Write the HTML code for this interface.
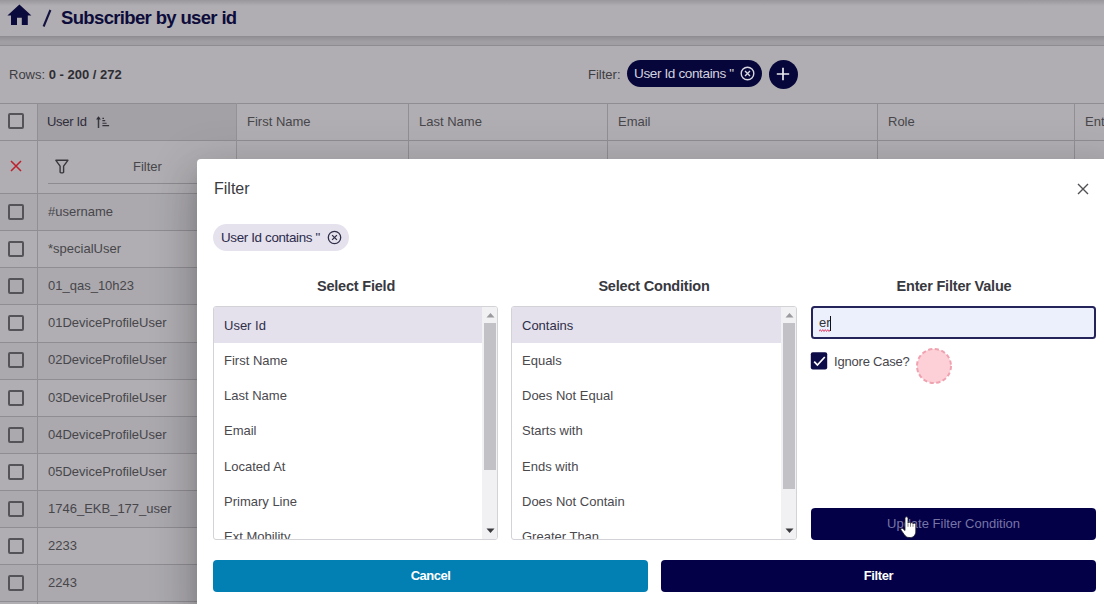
<!DOCTYPE html>
<html><head><meta charset="utf-8">
<style>
*{box-sizing:border-box;margin:0;padding:0}
html,body{width:1104px;height:604px;overflow:hidden;background:#b0aeb2;font-family:"Liberation Sans",sans-serif;position:relative}
.a{position:absolute}
.hdr{left:0;top:0;width:1104px;height:36px;background:#b0aeb2}
.band{left:0;top:36px;width:1104px;height:10px;background:linear-gradient(to bottom,#8d8b90 0px,#939196 1.5px,#9c9a9f 4px,#a19fa4 6px,#a09ea3 8.5px,#8e8c91 9.5px,#928f95 10px)}
.tb{left:0;top:46px;width:1104px;height:57px;background:#b0aeb2}
.tsh{left:0;top:0;width:1104px;height:6px;background:linear-gradient(to bottom,#99979c,rgba(176,174,178,0))}
.t{white-space:nowrap;line-height:1}
.grid{left:0;top:103px;width:1104px;height:501px}
.hl{left:0;width:1104px;height:1px;background:#8f8d92}
.vl{top:103px;width:1px;background:#918f94}
.cb{width:16px;height:16px;border:2px solid #545358;border-radius:2px}
.cell{font-size:13px;color:#47464b}
.dlg{left:197px;top:159px;width:920px;height:460px;background:#fff;border-radius:4px;box-shadow:0px 11px 15px -7px rgba(0,0,0,0.2),0px 24px 38px 3px rgba(0,0,0,0.14),0px 9px 46px 8px rgba(0,0,0,0.12)}
.lb{border:1px solid #d3d2d6;border-radius:3px;overflow:hidden;background:#fff}
.li{position:absolute;left:10px;font-size:13px;color:#4a494e;white-space:nowrap;line-height:1}
.btn{border-radius:4px;color:#fff;text-align:center;font-size:13px}
</style></head><body>
<!-- header -->
<div class="a hdr"></div>
<div class="a band"></div>
<div class="a tsh"></div>
<div class="a tb"></div>

<!-- home icon -->
<svg class="a" style="left:4.6px;top:0.8px" width="28.8" height="28.8" viewBox="0 0 24 24"><path d="M10 20v-6h4v6h5v-8h3L12 3 2 12h3v8z" fill="#0b0a3c"/></svg>
<svg class="a" style="left:40px;top:8px" width="14" height="20" viewBox="0 0 14 20"><path d="M3.6 18.5 L10.4 2" stroke="#14133f" stroke-width="2.1"/></svg>
<div class="a t" style="left:61px;top:8.5px;font-size:18.5px;font-weight:bold;color:#0d0c3b;letter-spacing:-0.65px">Subscriber by user id</div>

<div class="a t" style="left:9px;top:68px;font-size:13px;color:#3e3d42">Rows: <b style="color:#2e2d32">0 - 200 / 272</b></div>
<div class="a t" style="left:588px;top:68px;font-size:13px;color:#3e3d42">Filter:</div>
<div class="a" style="left:627px;top:60px;width:135px;height:27px;border-radius:14px;background:#07063a"></div>
<div class="a t" style="left:634px;top:66.5px;font-size:13.6px;color:#d2d1df;letter-spacing:-0.4px">User Id contains "</div>
<svg class="a" style="left:740px;top:66px" width="15" height="15" viewBox="0 0 15 15"><circle cx="7.5" cy="7.5" r="6.3" fill="none" stroke="#d8d7e0" stroke-width="1.4"/><path d="M5 5 L10 10 M10 5 L5 10" stroke="#d8d7e0" stroke-width="1.4"/></svg>
<div class="a" style="left:768.5px;top:59.5px;width:29px;height:29px;border-radius:50%;background:#07063a"></div>
<svg class="a" style="left:775px;top:66px" width="16" height="16" viewBox="0 0 16 16"><path d="M8 1.8 V14.2 M1.8 8 H14.2" stroke="#e8e8ee" stroke-width="1.7"/></svg>

<!-- table -->
<div class="a" style="left:0;top:193px;width:1104px;height:37px;background:#aba9ae"></div><div class="a" style="left:0;top:267px;width:1104px;height:37px;background:#aba9ae"></div><div class="a" style="left:0;top:342px;width:1104px;height:37px;background:#aba9ae"></div><div class="a" style="left:0;top:416px;width:1104px;height:37px;background:#aba9ae"></div><div class="a" style="left:0;top:490px;width:1104px;height:37px;background:#aba9ae"></div><div class="a" style="left:0;top:564px;width:1104px;height:37px;background:#aba9ae"></div>
<div class="a" style="left:37px;top:103px;width:200px;height:37px;background:#a3a1a6"></div>
<div class="a hl" style="top:103px"></div>
<div class="a hl" style="top:140px"></div>
<div class="a hl" style="top:193px"></div>
<div class="a hl" style="top:230px"></div>
<div class="a hl" style="top:267px"></div>
<div class="a hl" style="top:304px"></div>
<div class="a hl" style="top:342px"></div>
<div class="a hl" style="top:379px"></div>
<div class="a hl" style="top:416px"></div>
<div class="a hl" style="top:453px"></div>
<div class="a hl" style="top:490px"></div>
<div class="a hl" style="top:527px"></div>
<div class="a hl" style="top:564px"></div>
<div class="a hl" style="top:601px"></div>
<div class="a vl" style="left:37px;height:501px"></div>
<div class="a vl" style="left:236px;height:501px;background:#949297"></div>
<div class="a vl" style="left:408px;height:60px"></div>
<div class="a vl" style="left:607px;height:60px"></div>
<div class="a vl" style="left:877px;height:60px"></div>
<div class="a vl" style="left:1074px;height:60px"></div>

<div class="a cb" style="left:8px;top:113px"></div>
<div class="a t cell" style="left:47px;top:115px;letter-spacing:-0.3px;color:#2e2d3b">User Id</div>
<svg class="a" style="left:95px;top:115px" width="16" height="14" viewBox="0 0 16 14"><path d="M3.5 13 V2.5" stroke="#3a393f" stroke-width="1.5"/><path d="M1.1 4.6 L3.5 1.2 L5.9 4.6 Z" fill="#2f2e38"/><path d="M7.4 3.4 H9 M7.4 5.6 H10.2 M7.4 8.2 H11.6 M7.4 10.6 H14.1" stroke="#35343c" stroke-width="1.1"/></svg>
<div class="a t cell" style="left:247px;top:115px">First Name</div>
<div class="a t cell" style="left:419px;top:115px">Last Name</div>
<div class="a t cell" style="left:618px;top:115px">Email</div>
<div class="a t cell" style="left:888px;top:115px">Role</div>
<div class="a t cell" style="left:1085px;top:115px">Ent</div>

<svg class="a" style="left:10px;top:160px" width="12" height="12" viewBox="0 0 12 12"><path d="M1 1 L11 11 M11 1 L1 11" stroke="#bd1f2d" stroke-width="1.5"/></svg>
<svg class="a" style="left:55px;top:159px" width="14" height="16" viewBox="0 0 14 16"><path d="M0.9 1.3 H12.9 L8.6 7.2 V13.2 Q6.9 14.6 5.1 13.2 V7.2 Z" stroke="#38373c" stroke-width="1.4" fill="none" stroke-linejoin="round"/></svg>
<div class="a t cell" style="left:133px;top:160px">Filter</div>
<div class="a" style="left:48px;top:183px;width:180px;height:1px;background:#8d8b90"></div>

<div class="a cb" style="left:8px;top:204px"></div><div class="a t cell" style="left:48px;top:205px">#username</div>
<div class="a cb" style="left:8px;top:241px"></div><div class="a t cell" style="left:48px;top:242px">*specialUser</div>
<div class="a cb" style="left:8px;top:278px"></div><div class="a t cell" style="left:48px;top:279px">01_qas_10h23</div>
<div class="a cb" style="left:8px;top:315px"></div><div class="a t cell" style="left:48px;top:316px">01DeviceProfileUser</div>
<div class="a cb" style="left:8px;top:352px"></div><div class="a t cell" style="left:48px;top:353px">02DeviceProfileUser</div>
<div class="a cb" style="left:8px;top:390px"></div><div class="a t cell" style="left:48px;top:391px">03DeviceProfileUser</div>
<div class="a cb" style="left:8px;top:427px"></div><div class="a t cell" style="left:48px;top:428px">04DeviceProfileUser</div>
<div class="a cb" style="left:8px;top:464px"></div><div class="a t cell" style="left:48px;top:465px">05DeviceProfileUser</div>
<div class="a cb" style="left:8px;top:501px"></div><div class="a t cell" style="left:48px;top:502px">1746_EKB_177_user</div>
<div class="a cb" style="left:8px;top:538px"></div><div class="a t cell" style="left:48px;top:539px">2233</div>
<div class="a cb" style="left:8px;top:575px"></div><div class="a t cell" style="left:48px;top:576px">2243</div>

<!-- dialog -->
<div class="a dlg"></div>

<div class="a t" style="left:214px;top:181px;font-size:16px;color:#3b3b3f">Filter</div>
<svg class="a" style="left:1077px;top:183px" width="12" height="12" viewBox="0 0 12 12"><path d="M1 1 L11 11 M11 1 L1 11" stroke="#505055" stroke-width="1.4"/></svg>
<div class="a" style="left:213px;top:224px;width:136px;height:27px;border-radius:14px;background:#e5e2ee"></div>
<div class="a t" style="left:221px;top:230.5px;font-size:13.4px;color:#2c2b4a;letter-spacing:-0.35px">User Id contains "</div>
<svg class="a" style="left:327px;top:230px" width="15" height="15" viewBox="0 0 15 15"><circle cx="7.5" cy="7.5" r="6.2" fill="none" stroke="#2f2e48" stroke-width="1.3"/><path d="M5.1 5.1 L9.9 9.9 M9.9 5.1 L5.1 9.9" stroke="#2f2e48" stroke-width="1.3"/></svg>

<div class="a t" style="left:213px;top:279px;width:286px;text-align:center;font-size:14.5px;font-weight:bold;color:#38393f;letter-spacing:-0.2px">Select Field</div>
<div class="a t" style="left:511px;top:279px;width:286px;text-align:center;font-size:14.5px;font-weight:bold;color:#38393f;letter-spacing:-0.2px">Select Condition</div>
<div class="a t" style="left:811px;top:279px;width:286px;text-align:center;font-size:14.5px;font-weight:bold;color:#38393f;letter-spacing:-0.2px">Enter Filter Value</div>

<div class="a lb" style="left:213px;top:306px;width:285px;height:234px">
  <div class="a" style="left:0;top:0;width:268px;height:36px;background:#e4e1ed"></div>
  <div class="li" style="top:12.3px;color:#2f2e48">User Id</div>
  <div class="li" style="top:47.4px">First Name</div>
  <div class="li" style="top:82.4px">Last Name</div>
  <div class="li" style="top:117.4px">Email</div>
  <div class="li" style="top:152.6px">Located At</div>
  <div class="li" style="top:187.7px">Primary Line</div>
  <div class="li" style="top:222.8px">Ext Mobility</div>
  <div class="a" style="left:268px;top:0;width:16px;height:232px;background:#f1f0f3"></div>
  <div class="a" style="left:269.5px;top:16px;width:12px;height:147px;background:#c2c1c5"></div>
  <svg class="a" style="left:271.5px;top:5px" width="9" height="6" viewBox="0 0 9 6"><path d="M0.5 5.5 L4.5 1 L8.5 5.5 Z" fill="#9a9a9e"/></svg>
  <svg class="a" style="left:271.5px;top:221px" width="9" height="6" viewBox="0 0 9 6"><path d="M0.5 0.5 L4.5 5 L8.5 0.5 Z" fill="#3a3a3e"/></svg>
</div>

<div class="a lb" style="left:511px;top:306px;width:286px;height:234px">
  <div class="a" style="left:0;top:0;width:269px;height:36px;background:#e4e1ed"></div>
  <div class="li" style="top:12.3px;color:#2f2e48">Contains</div>
  <div class="li" style="top:47.4px">Equals</div>
  <div class="li" style="top:82.4px">Does Not Equal</div>
  <div class="li" style="top:117.4px">Starts with</div>
  <div class="li" style="top:152.6px">Ends with</div>
  <div class="li" style="top:187.7px">Does Not Contain</div>
  <div class="li" style="top:222.8px">Greater Than</div>
  <div class="a" style="left:269px;top:0;width:16px;height:232px;background:#f1f0f3"></div>
  <div class="a" style="left:271px;top:16px;width:12px;height:166px;background:#c2c1c5"></div>
  <svg class="a" style="left:273px;top:5px" width="9" height="6" viewBox="0 0 9 6"><path d="M0.5 5.5 L4.5 1 L8.5 5.5 Z" fill="#9a9a9e"/></svg>
  <svg class="a" style="left:273px;top:221px" width="9" height="6" viewBox="0 0 9 6"><path d="M0.5 0.5 L4.5 5 L8.5 0.5 Z" fill="#3a3a3e"/></svg>
</div>

<div class="a" style="left:811px;top:306px;width:285px;height:33px;border:2px solid #25245a;border-radius:3.5px;background:#eceffc"></div>
<div class="a t" style="left:819px;top:316px;font-size:13px;color:#333">er</div>
<div class="a" style="left:830px;top:316px;width:1px;height:15px;background:#111"></div>
<svg class="a" style="left:819px;top:328.5px" width="11" height="3" viewBox="0 0 11 3"><path d="M0 2.5 L1.25 0.6 L2.5 2.5 L3.75 0.6 L5 2.5 L6.25 0.6 L7.5 2.5 L8.75 0.6 L10 2.5 L11 0.8" stroke="#dc3c64" stroke-width="0.9" fill="none"/></svg>


<svg class="a" style="left:810px;top:351px" width="19" height="20" viewBox="0 0 19 20"><rect x="0.8" y="1.2" width="16.4" height="17.2" rx="2" fill="#0d0b48"/><path d="M4.2 10.6 L7.4 14.1 L14.8 6" stroke="#fff" stroke-width="1.7" fill="none"/></svg>
<div class="a t" style="left:834px;top:355px;font-size:13px;color:#47464c;letter-spacing:-0.2px">Ignore Case?</div>
<svg class="a" style="left:914px;top:346px" width="40" height="40" viewBox="0 0 40 40"><circle cx="20" cy="20" r="17" fill="#fdd0d8" stroke="#efa2b0" stroke-width="2" stroke-dasharray="4.2 2.5"/></svg>

<div class="a btn" style="left:811px;top:508px;width:285px;height:32px;background:#030048"></div>
<div class="a t" style="left:811px;top:517px;width:285px;text-align:center;font-size:13px;color:#7675a6">Update Filter Condition</div>

<div class="a btn" style="left:213px;top:560px;width:435px;height:32px;background:#0280b4"></div>
<div class="a t" style="left:213px;top:569px;width:435px;text-align:center;font-size:13px;font-weight:bold;color:#fff;letter-spacing:-0.5px">Cancel</div>
<div class="a btn" style="left:661px;top:560px;width:435px;height:32px;background:#030048"></div>
<div class="a t" style="left:661px;top:569px;width:435px;text-align:center;font-size:13px;font-weight:bold;color:#fff;letter-spacing:-0.4px">Filter</div>

<!-- cursor -->
<svg class="a" style="left:898px;top:514px" width="22" height="26" viewBox="0 0 22 26"><path d="M7 4.5 C7 2.3 10 2.3 10 4.5 V9 C10 7.9 12.5 7.9 12.5 9 V9.5 C12.5 8.4 15 8.4 15 9.5 V10 C15 8.9 17.8 8.9 17.8 10.5 V17 C17.8 21 15.5 23.5 12.5 23.5 H11 C9 23.5 7.5 22.5 6.2 20.5 L3 16 C2.2 14.8 3.8 13.6 4.8 14.6 L7 16.5 Z" fill="#fff" stroke="#1a1a2a" stroke-width="0.8"/><path d="M10 9.3 V12.8 M12.5 9.8 V12.8 M15 10.3 V12.8" stroke="#333" stroke-width="0.6"/></svg>
</body></html>
